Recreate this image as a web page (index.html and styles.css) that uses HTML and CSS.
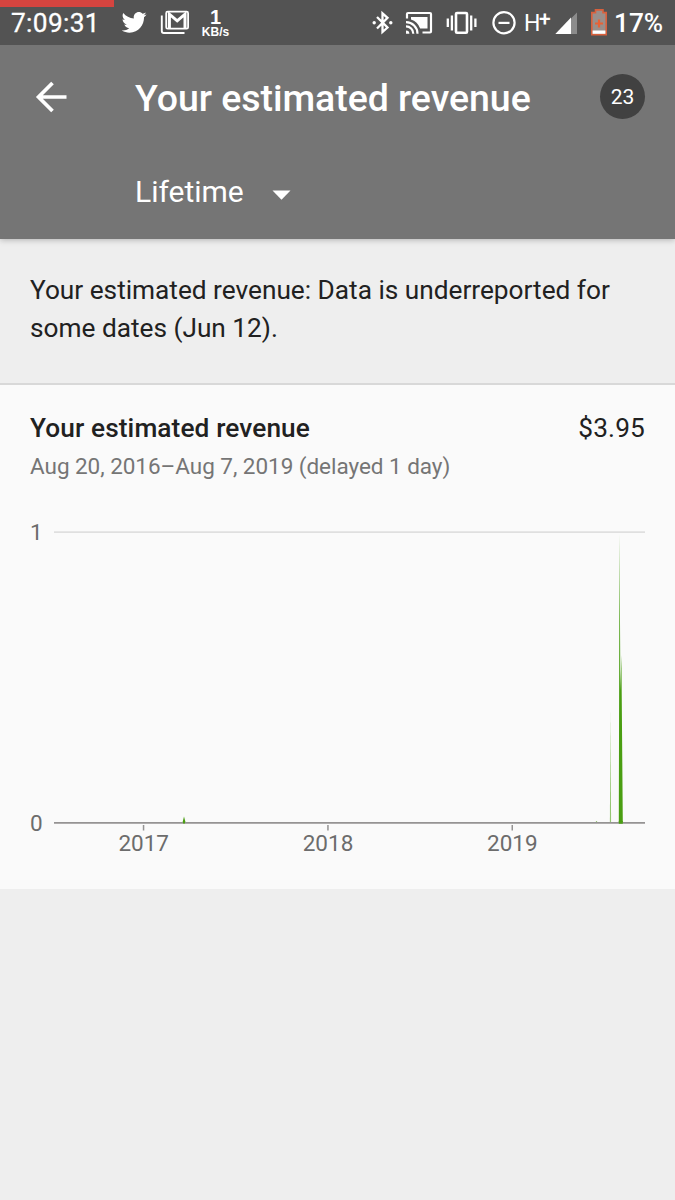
FILE: index.html
```html
<!DOCTYPE html>
<html lang="en">
<head>
<meta charset="utf-8">
<title>Your estimated revenue</title>
<link rel="stylesheet" href="styles.css">
</head>
<body>
<div class="screen">
  <div class="status">
    <div class="progress"></div>
    <div class="status-group">
      <span class="clock">7:09:31</span>
      <svg class="ico" width="26" height="45" viewBox="122 0 26 45"><path fill="#fff" transform="translate(121.600 9.600) scale(1.04 1.06)" d="M23.954 4.569c-.885.389-1.83.654-2.825.775 1.014-.611 1.794-1.574 2.163-2.723-.951.555-2.005.959-3.127 1.184-.896-.959-2.173-1.559-3.591-1.559-2.717 0-4.92 2.203-4.92 4.917 0 .39.045.765.127 1.124C7.691 8.094 4.066 6.13 1.64 3.161c-.427.722-.666 1.561-.666 2.475 0 1.71.87 3.213 2.188 4.096-.807-.026-1.566-.248-2.228-.616v.061c0 2.385 1.693 4.374 3.946 4.827-.413.111-.849.171-1.296.171-.314 0-.615-.03-.916-.086.631 1.953 2.445 3.377 4.604 3.417-1.68 1.319-3.809 2.105-6.102 2.105-.39 0-.779-.023-1.17-.067 2.189 1.394 4.768 2.209 7.557 2.209 9.054 0 13.999-7.496 13.999-13.986 0-.209 0-.42-.015-.63.961-.689 1.8-1.56 2.46-2.548z"/></svg>
      <svg class="ico mail" width="30" height="45" viewBox="160 0 30 45"><rect x="166.200" y="11.700" width="21.900" height="17" rx="1.500" fill="none" stroke="#fff" stroke-width="1.800"/><path fill="none" stroke="#fff" stroke-width="3" d="M169.400 28.500V14.200L177.200 20.800 185 14.200V28.500"/><path fill="none" stroke="#fff" stroke-width="1.900" d="M161.800 15.500v15.500q0 2 2 2H184.500"/></svg>
      <div class="speed"><span class="speed-num">1</span><span class="speed-unit">KB/s</span></div>
    </div>
    <div class="status-group">
      <svg class="ico" width="22" height="45" viewBox="372 0 22 45"><path fill="none" stroke="#fff" stroke-width="2.300" d="M377 17l10.500 10.500-5 4.500V13.300l5 4.500L377 28.500"/><circle cx="374.200" cy="22.800" r="1.700" fill="#fff"/><circle cx="390.800" cy="22.800" r="1.700" fill="#fff"/></svg>
      <svg class="ico cast" width="28" height="45" viewBox="405 0 28 45"><g fill="none" stroke="#fff" stroke-width="2.200"><path d="M407 18.500V14q0-1 1-1h22q1 0 1 1v17.500q0 1-1 1h-7.500"/><path d="M406 22.200a11.500 11.500 0 0 1 11.500 11.500M406 26.400a7.300 7.300 0 0 1 7.300 7.300"/></g><path fill="#fff" d="M406 30.400a3.400 3.400 0 0 1 3.400 3.400H406zM411 17h16.500v11.500h-7.300Q417.500 21.500 411 19.500z"/></svg>
      <svg class="ico vib" width="32" height="45" viewBox="446 0 32 45"><rect x="456" y="13" width="11" height="19.800" rx="1" fill="none" stroke="#fff" stroke-width="2.600"/><path stroke="#fff" stroke-width="2.300" d="M451.900 15.500v15M447.800 18.500v8.500M471.200 15.500v15M475.400 18.500v8.500"/></svg>
      <svg class="ico dnd" width="24" height="45" viewBox="492 0 24 45"><circle cx="504" cy="22.700" r="10.600" fill="none" stroke="#fff" stroke-width="2.200"/><path stroke="#fff" stroke-width="2.200" d="M498.500 22.900h11"/></svg>
      <span class="net">H<span class="plus">+</span></span>
      <svg class="ico sig" width="22" height="45" viewBox="555 0 22 45"><path fill="#8c8c8c" d="M571 18.500l6-6V34h-6z"/><path fill="#fff" d="M555.300 34L571 17.500V34z"/></svg>
      <svg class="ico bat" width="18" height="45" viewBox="590 0 18 45"><path fill="#9a8f8b" stroke="#d9603c" stroke-width="1.600" d="M595.500 12.600V9.900h7.500v2.700h3.200v22h-14.400v-22z"/><path fill="#fff" d="M592.600 30.500h12.800v3.300h-12.800z"/><path stroke="#e86236" stroke-width="2.200" d="M599 19.500v8M595 23.500h8"/></svg>
      <span class="pct">17%</span>
    </div>
  </div>

  <header class="header">
    <div class="title-row">
      <svg class="back" width="32" height="32" viewBox="35 81 32 32"><path fill="none" stroke="#fff" stroke-width="3.700" d="M66.500 97H38.500M52.500 83l-14 14 14 14"/></svg>
      <h1 class="title">Your estimated revenue</h1>
      <span class="badge">23</span>
    </div>
    <div class="period"><span class="period-label">Lifetime</span><svg width="20" height="10" viewBox="0 0 20 10"><path fill="#fff" d="M.5.5h18L9.500 9.700z"/></svg></div>
  </header>

  <p class="notice">Your estimated revenue: Data is underreported for some dates (Jun 12).</p>

  <section class="card">
    <div class="card-head"><h2 class="card-title">Your estimated revenue</h2><span class="amount">$3.95</span></div>
    <p class="range">Aug 20, 2016–Aug 7, 2019 (delayed 1 day)</p>
    <svg class="chart" width="675" height="388" viewBox="0 500 675 388">
      <path fill="#dfdfdf" d="M54 531.200h591v1.900H54z"/>
      <path fill="#96c673" d="M609.900 822l.5-111 .7 111z"/>
      <path fill="#4a9e12" d="M618.800 822.500L619.500 534 620.400 690 621.400 655 622.800 822.500zM182.500 822.500l1.500-6 1.600 6zM595 822.500l1.500-1.200 1.500 1.200z"/>
      <path fill="#959393" d="M54 822h591v1.800H54zM142.800 825h1.500v5.500h-1.500zM327.200 825h1.500v5.500h-1.500zM511.500 825h1.500v5.500h-1.500z"/>
      <path fill="#4a9e12" d="M618.800 821h4v2.800h-4zM183 821h2v2.500h-2z"/>
      <g class="axis"><text x="30" y="540">1</text><text x="30" y="830.500">0</text><g text-anchor="middle"><text x="143.700" y="851">2017</text><text x="328" y="851">2018</text><text x="512.300" y="851">2019</text></g></g>
    </svg>
  </section>
</div>
</body>
</html>
```
FILE: styles.css
```css
* { box-sizing: border-box; }
body, h1, h2, p { margin: 0; font-weight: 400; }
body { background: #eee; font-family: Roboto, sans-serif; color: #212121; }
svg { display: block; flex: none; }
.screen { width: 675px; height: 1200px; overflow: hidden; }

.status { position: relative; z-index: 1; display: flex; justify-content: space-between; height: 45px; padding: 0 12px 0 11px; background: #535353; color: #fff; }
.progress { position: absolute; left: 0; top: 0; width: 114px; height: 7px; background: #d5443f; }
.status-group { display: flex; height: 45px; }
.clock { width: 111px; font-size: 26.25px; line-height: 46px; letter-spacing: .35px; -webkit-text-stroke: .3px #fff; }
.mail { margin-left: 12px; }
.speed { display: flex; flex-direction: column; align-items: center; margin-left: 11px; width: 29px; font-family: "Liberation Sans", sans-serif; font-weight: 700; }
.speed-num { margin-top: 7px; font-size: 20px; line-height: 20px; }
.speed-unit { font-size: 12px; line-height: 10px; }
.cast { margin-left: 11px; }
.vib { margin-left: 13px; }
.dnd { margin-left: 14px; }
.net { margin-left: 8px; width: 26px; font-size: 23px; line-height: 47px; white-space: nowrap; letter-spacing: -1.5px; }
.plus { font-size: 21px; font-weight: 500; vertical-align: 5px; line-height: 1; }
.sig { margin-left: 5px; }
.bat { margin-left: 13px; }
.pct { margin-left: 6px; width: 49px; font-size: 26.25px; font-weight: 500; line-height: 47px; white-space: nowrap; }

.header { position: relative; height: 194px; background: #757575; color: #fff; box-shadow: 0 1px 6px rgba(0, 0, 0, .25); }
.title-row { display: flex; align-items: center; height: 104px; padding: 0 30px 0 35px; }
.title { flex: 1; margin: 2px 0 0 68px; font-size: 37.500px; font-weight: 500; line-height: 50px; white-space: nowrap; letter-spacing: -.05px; }
.badge { width: 45px; height: 45px; margin-bottom: 1px; border-radius: 50%; background: #414141; font-size: 21px; line-height: 46px; text-align: center; }
.period { display: flex; align-items: center; gap: 28px; height: 84px; padding-left: 135px; font-size: 30px; }
.period svg { margin-top: 7px; }

.notice { height: 146px; padding: 32px 30px 0; border-bottom: 2px solid #d8d8d8; font-size: 26.250px; line-height: 38px; letter-spacing: -.015px; }
.card { height: 504px; padding-top: 27px; background: #fafafa; }
.card-head { display: flex; justify-content: space-between; padding: 0 30px; font-size: 26.250px; line-height: 32px; }
.card-title { font-size: 26.250px; font-weight: 500; letter-spacing: .1px; }
.amount { letter-spacing: .15px; }
.range { margin: 8px 30px 0; height: 28px; font-size: 22.500px; line-height: 28px; letter-spacing: -.04px; color: #757575; }
.chart { margin-top: 20px; }
.axis { font-size: 22.500px; fill: #6c6c6c; }
```
